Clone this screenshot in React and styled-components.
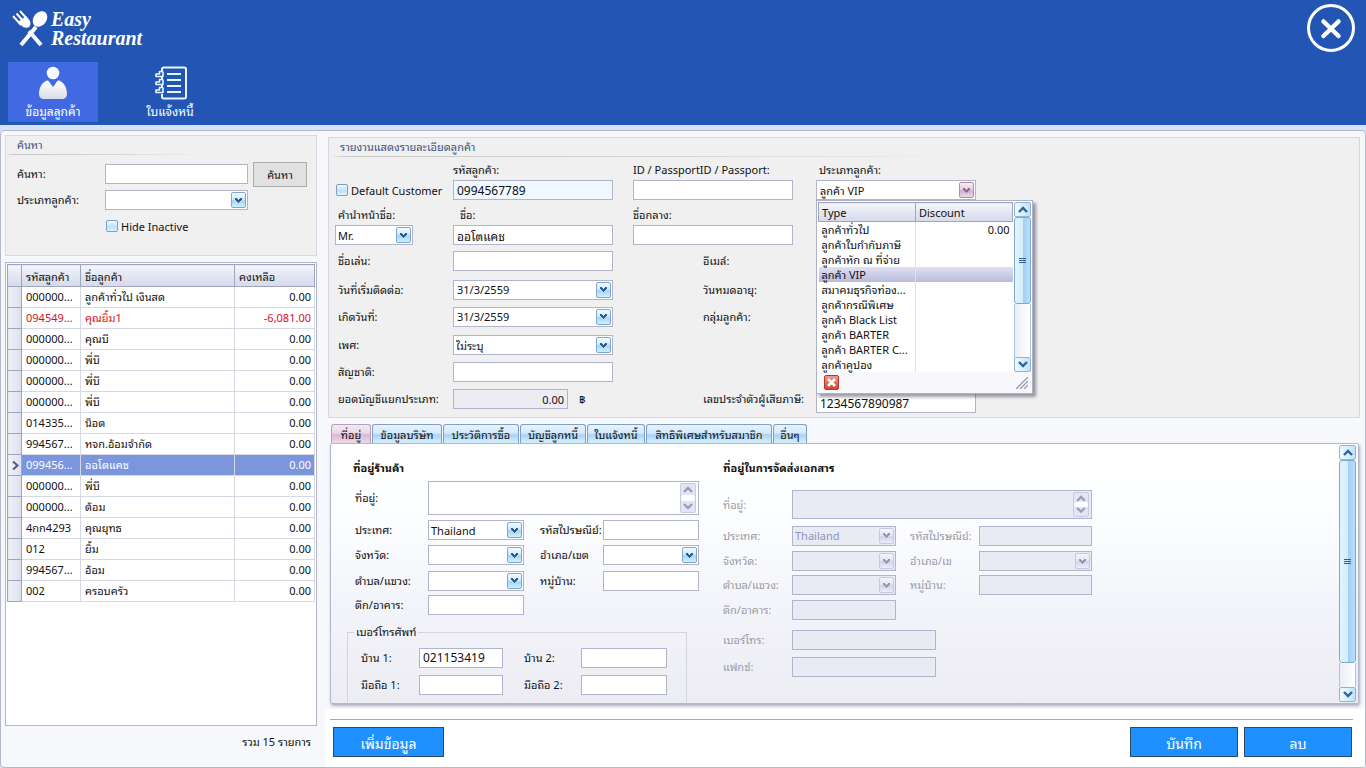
import React from 'react';
import styled, { createGlobalStyle, css } from 'styled-components';

const customers = [
    { code: '000000...', name: 'ลูกค้าทั่วไป เงินสด', balance: '0.00' },
    { code: '094549...', name: 'คุณยิ้ม1', balance: '-6,081.00', negative: true },
    { code: '000000...', name: 'คุณบี', balance: '0.00' },
    { code: '000000...', name: 'พี่บี', balance: '0.00' },
    { code: '000000...', name: 'พี่บี', balance: '0.00' },
    { code: '000000...', name: 'พี่บี', balance: '0.00' },
    { code: '014335...', name: 'น็อต', balance: '0.00' },
    { code: '994567...', name: 'หจก.อ้อมจำกัด', balance: '0.00' },
    { code: '099456...', name: 'ออโตแคช', balance: '0.00', selected: true },
    { code: '000000...', name: 'พี่บี', balance: '0.00' },
    { code: '000000...', name: 'ต้อม', balance: '0.00' },
    { code: '4กก4293', name: 'คุณยุทธ', balance: '0.00' },
    { code: '012', name: 'ยิ้ม', balance: '0.00' },
    { code: '994567...', name: 'อ้อม', balance: '0.00' },
    { code: '002', name: 'ครอบครัว', balance: '0.00' },
];

const customerTypes = [
    { type: 'ลูกค้าทั่วไป', discount: '0.00' },
    { type: 'ลูกค้าใบกำกับภาษี' },
    { type: 'ลูกค้าหัก ณ ที่จ่าย' },
    { type: 'ลูกค้า VIP', selected: true },
    { type: 'สมาคมธุรกิจท่อง...' },
    { type: 'ลูกค้ากรณีพิเศษ' },
    { type: 'ลูกค้า Black List' },
    { type: 'ลูกค้า BARTER' },
    { type: 'ลูกค้า BARTER C...' },
    { type: 'ลูกค้าคูปอง' },
];

const tabs = [
    { label: 'ที่อยู่', width: 40 },
    { label: 'ข้อมูลบริษัท', width: 70 },
    { label: 'ประวัติการซื้อ', width: 76 },
    { label: 'บัญชีลูกหนี้', width: 66 },
    { label: 'ใบแจ้งหนี้', width: 58 },
    { label: 'สิทธิพิเศษสำหรับสมาชิก', width: 126 },
    { label: 'อื่นๆ', width: 34 },
];

function Chevron({ up }) {
    return (
        <svg width="10" height="7" viewBox="0 0 10 7" fill="none" stroke="currentColor" strokeWidth="2.4">
            <path d={up ? 'M1 6 5 2l4 4' : 'M1 1l4 4 4-4'} />
        </svg>
    );
}

function Arrow() {
    return (
        <svg width="7" height="5" viewBox="0 0 7 5" fill="currentColor">
            <path d="M0 0h2v1h1v1h1V1h1V0h2v2H6v1H5v1H4v1H3V4H2V3H1V2H0z" />
        </svg>
    );
}

function Select({ id, value = '', disabled, width }) {
    return (
        <Box $width={width} $disabled={disabled}>
            <NativeSelect id={id} defaultValue={value} disabled={disabled}>
                <option>{value}</option>
            </NativeSelect>
            <Drop as="span" $disabled={disabled}><Arrow /></Drop>
        </Box>
    );
}

function DateBox({ id, value }) {
    return (
        <Box $width={160}>
            <BoxInput id={id} defaultValue={value} />
            <Drop type="button" aria-label={value}><Arrow /></Drop>
        </Box>
    );
}

function ScrollBar({ thumb, track }) {
    return (
        <Scroll>
            <ScrollEnd type="button" aria-label="up"><Chevron up /></ScrollEnd>
            <Thumb $size={thumb}><i /><i /><i /></Thumb>
            <Track $size={track} />
            <ScrollEnd type="button" aria-label="down"><Chevron /></ScrollEnd>
        </Scroll>
    );
}

function TextBox({ id, disabled }) {
    return (
        <AreaBox $disabled={disabled}>
            <textarea id={id} disabled={disabled} />
            <Spin>
                <Chevron up />
                <b />
                <Chevron />
            </Spin>
        </AreaBox>
    );
}

function Header() {
    return (
        <HeaderStyled>
            <div className="top">
                <a className="logo" href="#">
                    <svg width="38" height="38" viewBox="0 0 38 38" fill="none" stroke="#fff">
                        <path d="M17 21 29 35" strokeWidth="4" />
                        <path d="M24 17 9 35" strokeWidth="4" />
                        <path d="M1 6l8 9M4.500 3.500l8 9M8 1l8 9" strokeWidth="1.900" />
                        <path d="M6 12 14 6l4 5c1 3 0 5-1 6s-4 1-6 0z" fill="#fff" stroke="none" />
                        <ellipse cx="28" cy="9" rx="6.500" ry="8.500" transform="rotate(38 28 9)" fill="#fff" stroke="none" />
                    </svg>
                    <span>Easy<br />Restaurant</span>
                </a>
                <button className="close" aria-label="close">
                    <svg width="48" height="48" viewBox="0 0 48 48" fill="none" stroke="#fff">
                        <circle cx="24" cy="24" r="22.500" strokeWidth="3" />
                        <path d="M16.500 17.500 31.500 32M31.500 17.500 16.500 32" strokeWidth="4.500" strokeLinecap="round" />
                    </svg>
                </button>
            </div>
            <nav>
                <NavButton $active>
                    <svg width="32" height="34" viewBox="0 0 32 34">
                        <defs>
                            <linearGradient id="person" x1="0" y1="0" x2="0" y2="1">
                                <stop offset="0" stopColor="#fff" />
                                <stop offset="1" stopColor="#d9dde8" />
                            </linearGradient>
                        </defs>
                        <circle cx="16" cy="7" r="6.300" fill="#f5faff" />
                        <path d="M9 15c2-1 3 0 4 2l3 4 3-4c1-2 2-3 4-2 5 2 7 8 7 13 0 3-2 5-5 5H7c-3 0-5-2-5-5 0-5 2-11 7-13z" fill="url(#person)" />
                    </svg>
                    ข้อมูลลูกค้า
                </NavButton>
                <NavButton>
                    <svg width="34" height="34" viewBox="0 0 34 34" fill="none" stroke="#eaf6ff" strokeWidth="2">
                        <path d="M9 5V3c0-1 1-1.500 2-1.500h20c1 0 2 .5 2 1.500v28c0 1-1 1.500-2 1.500H11c-1 0-2-.5-2-1.500v-3M9 10v3M9 18v3" />
                        <path d="M14 8h14M14 14h14M14 20h14M14 26h14" />
                        <path d="M10 5.500H6.500v2.500H3v2.500h7V5.500M10 13.500H6.500V16H3v2.500h7v-5M10 21.500H6.500V24H3v2.500h7v-5" strokeWidth="1.600" strokeLinejoin="round" />
                    </svg>
                    ใบแจ้งหนี้
                </NavButton>
            </nav>
        </HeaderStyled>
    );
}

function Sidebar() {
    return (
        <SidebarStyled>
            <Group>
                <GroupTitle>ค้นหา</GroupTitle>
                <SearchForm>
                    <Label htmlFor="search">ค้นหา:</Label>
                    <Input id="search" />
                    <SearchButton type="button">ค้นหา</SearchButton>
                    <Label htmlFor="searchType">ประเภทลูกค้า:</Label>
                    <Select id="searchType" />
                    <Check className="inactive"><input type="checkbox" />Hide Inactive</Check>
                </SearchForm>
            </Group>
            <GridBox>
                <CustomerTable>
                    <colgroup>
                        <col className="mark" />
                        <col className="code" />
                        <col />
                        <col className="balance" />
                    </colgroup>
                    <thead>
                        <tr>
                            <th />
                            <th>รหัสลูกค้า</th>
                            <th>ชื่อลูกค้า</th>
                            <th>คงเหลือ</th>
                        </tr>
                    </thead>
                    <tbody>
                        {customers.map((c, i) => (
                            <CustomerRow key={i} $negative={c.negative} $selected={c.selected}>
                                <th>
                                    {c.selected && (
                                        <svg width="8" height="9" viewBox="0 0 8 9" fill="none" stroke="#4f5a8c" strokeWidth="2">
                                            <path d="M1 .5 5.500 4.500 1 8.500" />
                                        </svg>
                                    )}
                                </th>
                                <td>{c.code}</td>
                                <td>{c.name}</td>
                                <td className="number">{c.balance}</td>
                            </CustomerRow>
                        ))}
                    </tbody>
                </CustomerTable>
            </GridBox>
            <Total>รวม 15 รายการ</Total>
        </SidebarStyled>
    );
}

function TypePopup() {
    return (
        <Popup>
            <div className="list">
                <TypeTable>
                    <thead>
                        <tr><th>Type</th><th>Discount</th></tr>
                    </thead>
                    <tbody>
                        {customerTypes.map((t) => (
                            <TypeRow key={t.type} $selected={t.selected}>
                                <td>{t.type}</td>
                                <td className="number">{t.discount}</td>
                            </TypeRow>
                        ))}
                    </tbody>
                </TypeTable>
                <ScrollBar thumb={87} track={54} />
            </div>
            <div className="bottom">
                <button type="button" aria-label="clear">
                    <svg width="9" height="9" viewBox="0 0 9 9" stroke="#fff" strokeWidth="2.600">
                        <path d="M1 1l7 7M8 1 1 8" />
                    </svg>
                </button>
                <svg width="12" height="12" viewBox="0 0 12 12" stroke="#9a9db5" strokeWidth="1.400">
                    <path d="M0 12 12 0M4 12l8-8M8 12l4-4" />
                </svg>
            </div>
        </Popup>
    );
}

function Details() {
    return (
        <Group>
            <GroupTitle $wide>รายงานแสดงรายละเอียดลูกค้า</GroupTitle>
            <DetailForm>
                <Label htmlFor="code" $col={2} $row={1}>รหัสลูกค้า:</Label>
                <Label htmlFor="passport" $col="3 / 5" $row={1}>ID / PassportID / Passport:</Label>
                <Label htmlFor="type" $col={5} $row={1} $indent={3}>ประเภทลูกค้า:</Label>

                <Cell $col={1} $row={2}><Check><input type="checkbox" />Default Customer</Check></Cell>
                <Cell $col={2} $row={2}><Input id="code" defaultValue="0994567789" $width={160} $tint /></Cell>
                <Cell $col="3 / 5" $row={2}><Input id="passport" $width={160} /></Cell>
                <Cell $col={5} $row={2}>
                    <Anchor>
                        <Box $width={160}>
                            <BoxInput id="type" defaultValue="ลูกค้า VIP" />
                            <Drop type="button" aria-label="type" $open><Arrow /></Drop>
                        </Box>
                        <TypePopup />
                    </Anchor>
                </Cell>

                <Label htmlFor="title" $col={1} $row={3} $indent={3}>คำนำหน้าชื่อ:</Label>
                <Label htmlFor="name" $col={2} $row={3} $indent={7}>ชื่อ:</Label>
                <Label htmlFor="middle" $col="3 / 5" $row={3}>ชื่อกลาง:</Label>

                <Cell $col={1} $row={4}><Select id="title" value="Mr." width={78} /></Cell>
                <Cell $col={2} $row={4}><Input id="name" defaultValue="ออโตแคช" $width={160} /></Cell>
                <Cell $col="3 / 5" $row={4}><Input id="middle" $width={160} /></Cell>

                <Label htmlFor="nick" $col={1} $row={5} $indent={3}>ชื่อเล่น:</Label>
                <Cell $col={2} $row={5}><Input id="nick" $width={160} /></Cell>
                <Label as="span" $col={4} $row={5}>อีเมล์:</Label>

                <Label htmlFor="start" $col={1} $row={6} $indent={3}>วันที่เริ่มติดต่อ:</Label>
                <Cell $col={2} $row={6}><DateBox id="start" value="31/3/2559" /></Cell>
                <Label as="span" $col={4} $row={6}>วันหมดอายุ:</Label>

                <Label htmlFor="birth" $col={1} $row={7} $indent={3}>เกิดวันที่:</Label>
                <Cell $col={2} $row={7}><DateBox id="birth" value="31/3/2559" /></Cell>
                <Label as="span" $col={4} $row={7}>กลุ่มลูกค้า:</Label>

                <Label htmlFor="sex" $col={1} $row={8} $indent={3}>เพศ:</Label>
                <Cell $col={2} $row={8}><Select id="sex" value="ไม่ระบุ" width={160} /></Cell>

                <Label htmlFor="nation" $col={1} $row={9} $indent={3}>สัญชาติ:</Label>
                <Cell $col={2} $row={9}><Input id="nation" $width={160} /></Cell>

                <Label htmlFor="ledger" $col={1} $row={10} $indent={3}>ยอดบัญชีแยกประเภท:</Label>
                <Cell $col={2} $row={10}>
                    <LedgerInput id="ledger" defaultValue="0.00" readOnly $width={115} />
                    <span>฿</span>
                </Cell>
                <Label htmlFor="tax" $col={4} $row={10}>เลขประจำตัวผู้เสียภาษี:</Label>
                <TaxCell $col={5} $row={10}><Input id="tax" defaultValue="1234567890987" $width={160} /></TaxCell>
            </DetailForm>
        </Group>
    );
}

function ShopAddress() {
    return (
        <Address>
            <h3>ที่อยู่ร้านค้า</h3>
            <ShopGrid>
                <Label htmlFor="addr">ที่อยู่:</Label>
                <div className="wide"><TextBox id="addr" /></div>
                <Label htmlFor="country">ประเทศ:</Label>
                <Select id="country" value="Thailand" />
                <Label htmlFor="zip" $indent={16}>รหัสไปรษณีย์:</Label>
                <Input id="zip" />
                <Label htmlFor="province">จังหวัด:</Label>
                <Select id="province" />
                <Label htmlFor="district" $indent={16}>อำเภอ/เขต</Label>
                <Select id="district" />
                <Label htmlFor="sub">ตำบล/แขวง:</Label>
                <Select id="sub" />
                <Label htmlFor="village" $indent={16}>หมู่บ้าน:</Label>
                <Input id="village" />
                <Label htmlFor="building">ตึก/อาคาร:</Label>
                <Input id="building" />
            </ShopGrid>
            <Phones>
                <legend>เบอร์โทรศัพท์</legend>
                <Label htmlFor="home1">บ้าน 1:</Label>
                <Input id="home1" defaultValue="021153419" />
                <Label htmlFor="home2" $indent={21}>บ้าน 2:</Label>
                <Input id="home2" />
                <Label htmlFor="mobile1">มือถือ 1:</Label>
                <Input id="mobile1" />
                <Label htmlFor="mobile2" $indent={21}>มือถือ 2:</Label>
                <Input id="mobile2" />
            </Phones>
        </Address>
    );
}

function DeliveryAddress() {
    return (
        <Address>
            <h3>ที่อยู่ในการจัดส่งเอกสาร</h3>
            <DeliveryGrid>
                <Label htmlFor="dAddr">ที่อยู่:</Label>
                <div className="wide"><TextBox id="dAddr" disabled /></div>
                <Label htmlFor="dCountry">ประเทศ:</Label>
                <Select id="dCountry" value="Thailand" disabled />
                <Label htmlFor="dZip" $indent={14}>รหัสไปรษณีย์:</Label>
                <Input id="dZip" disabled />
                <Label htmlFor="dProvince">จังหวัด:</Label>
                <Select id="dProvince" disabled />
                <Label htmlFor="dDistrict" $indent={14}>อำเภอ/เข</Label>
                <Select id="dDistrict" disabled />
                <Label htmlFor="dSub">ตำบล/แขวง:</Label>
                <Select id="dSub" disabled />
                <Label htmlFor="dVillage" $indent={14}>หมู่บ้าน:</Label>
                <Input id="dVillage" disabled />
                <Label htmlFor="dBuilding">ตึก/อาคาร:</Label>
                <Input id="dBuilding" disabled />
                <Label htmlFor="dPhone" $col={1}>เบอร์โทร:</Label>
                <Input id="dPhone" disabled $width={144} />
                <Label htmlFor="dFax" $col={1}>แฟกซ์:</Label>
                <Input id="dFax" disabled $width={144} />
            </DeliveryGrid>
        </Address>
    );
}

function App() {
    return (
        <Page>
            <GlobalStyle />
            <Header />
            <Frame>
                <Sidebar />
                <Content>
                    <Upper>
                        <Details />
                        <TabList role="tablist">
                            {tabs.map((t, i) => (
                                <Tab key={t.label} role="tab" aria-selected={i === 0} $active={i === 0} $width={t.width}>
                                    {t.label}
                                </Tab>
                            ))}
                        </TabList>
                        <TabPanel>
                            <div className="body">
                                <ShopAddress />
                                <DeliveryAddress />
                            </div>
                            <ScrollBar thumb={204} track={24} />
                        </TabPanel>
                    </Upper>
                    <Actions>
                        <div className="bar">
                            <ActionButton $width={111}>เพิ่มข้อมูล</ActionButton>
                            <div className="right">
                                <ActionButton $width={108}>บันทึก</ActionButton>
                                <ActionButton $width={108}>ลบ</ActionButton>
                            </div>
                        </div>
                    </Actions>
                </Content>
            </Frame>
        </Page>
    );
}

const GlobalStyle = createGlobalStyle`
    *{
        box-sizing: border-box;
    }
    body{
        margin: 0;
        background: #fff;
    }
    body, button, input, select, textarea{
        font-family: 'Noto Sans', 'Noto Looped Thai', 'Noto Sans Thai Looped', Loma, Waree, 'Noto Sans Thai', sans-serif;
        font-size: 11px;
        color: #111;
    }
    button{
        padding: 0;
    }
`;

const Page = styled.div`
    display: flex;
    flex-direction: column;
    height: 100vh;
    background: #d5e3f9;
`;

const HeaderStyled = styled.header`
    height: 125px;
    flex: none;
    background: #2356b4;
    .top{
        display: flex;
        justify-content: space-between;
        height: 62px;
        padding: 4px 11px 0 12px;
    }
    .logo{
        display: flex;
        gap: 1px;
        padding-top: 6px;
        color: #fff;
        text-decoration: none;
        font: italic bold 20px/19px 'Liberation Serif', serif;
    }
    .close{
        width: 48px;
        height: 48px;
        border: 0;
        background: none;
    }
    nav{
        display: flex;
        gap: 27px;
        padding-left: 8px;
    }
`;

const NavButton = styled.button`
    display: flex;
    flex-direction: column;
    align-items: center;
    gap: 3px;
    width: 90px;
    height: 60px;
    padding-top: 4px;
    border: 0;
    font-size: 12px;
    line-height: 17px;
    color: #fff;
    background: ${(p) => (p.$active ? '#4169e1' : 'none')};
`;

const Frame = styled.main`
    display: flex;
    flex: 1;
    min-height: 0;
    margin-top: 5px;
    border: 1px solid #b4b8cc;
    border-radius: 4px;
    background: #f7f8fc;
    overflow: hidden;
`;

const SidebarStyled = styled.aside`
    display: flex;
    flex-direction: column;
    flex: none;
    width: 320px;
    padding: 4px 4px 0;
`;

const Group = styled.section`
    border: 1px solid #d6dae0;
    background: #f0f0f0;
`;

const GroupTitle = styled.h2`
    margin: 0;
    height: 19px;
    padding-left: 11px;
    font-size: 11px;
    font-weight: normal;
    line-height: 18px;
    color: #3b5580;
    background: linear-gradient(to right, #f0f0f0, #c8c8c8 3%, #d4d4d4 50%, #f0f0f0) left bottom / ${(p) => (p.$wide ? '62%' : '64%')} 1px no-repeat;
`;

const SearchForm = styled.form`
    display: grid;
    grid-template-columns: 83px 143px 54px;
    grid-auto-rows: 26px;
    column-gap: 5px;
    align-items: center;
    padding: 6px 0 16px 11px;
    .inactive{
        grid-column: 2;
    }
`;

const Label = styled.label`
    grid-column: ${(p) => p.$col || 'auto'};
    grid-row: ${(p) => p.$row || 'auto'};
    align-self: ${(p) => (p.$row === 3 ? 'end' : 'center')};
    padding-left: ${(p) => p.$indent || 0}px;
    line-height: 18px;
    white-space: nowrap;
`;

const Cell = styled.div`
    display: flex;
    align-items: center;
    gap: 11px;
    grid-column: ${(p) => p.$col};
    grid-row: ${(p) => p.$row};
`;

const TaxCell = styled(Cell)`
    align-items: flex-end;
    padding-bottom: 2px;
`;

const Anchor = styled.div`
    position: relative;
`;

const Input = styled.input`
    width: ${(p) => (p.$width ? p.$width + 'px' : '100%')};
    height: 20px;
    padding: 0 3px;
    border: 1px solid #b3b3cc;
    outline: 0;
    font-size: 12px;
    background: ${(p) => (p.$tint ? '#f0f8ff' : '#fff')};
    &:disabled{
        background: #e8ebf3;
        border-color: #b1b4cc;
    }
`;

const LedgerInput = styled(Input)`
    font-size: 11px;
    text-align: right;
    background: #ececf2;
`;

const Box = styled.div`
    display: grid;
    grid-template-columns: 1fr 16px;
    align-items: center;
    width: ${(p) => (p.$width ? p.$width + 'px' : '100%')};
    height: 20px;
    border: 1px solid #b3b3cc;
    background: ${(p) => (p.$disabled ? '#e8ebf3' : '#fff')};
`;

const NativeSelect = styled.select`
    grid-area: 1 / 1 / 2 / 3;
    height: 18px;
    padding: 0 18px 0 2px;
    border: 0;
    outline: 0;
    appearance: none;
    background: none;
    &:disabled{
        color: #8f93c0;
        opacity: 1;
    }
`;

const BoxInput = styled.input`
    grid-area: 1 / 1 / 2 / 2;
    min-width: 0;
    height: 18px;
    padding: 0 3px;
    border: 0;
    outline: 0;
    background: none;
`;

const Drop = styled.button`
    grid-area: 1 / 2 / 2 / 3;
    display: flex;
    align-items: center;
    justify-content: center;
    width: 15px;
    height: 16px;
    border: 1px solid #7fa9cc;
    border-radius: 2px;
    color: #2c5b8c;
    pointer-events: none;
    background: linear-gradient(#f2fbff, #cfeafb 45%, #a6d4f5 55%, #cdf0ff);
    ${(p) => p.$open && css`
        border-color: #b58bab;
        color: #8b6b8e;
        background: linear-gradient(#f7eef4, #e6cfdf 45%, #d3adc9 55%, #eed9e8);
    `}
    ${(p) => p.$disabled && css`
        border-color: #c6c9e0;
        color: #9396b8;
        background: linear-gradient(#f4f5fc, #e4e6f4 45%, #d0d3ea 55%, #eceefa);
    `}
`;

const SearchButton = styled.button`
    height: 25px;
    border: 1px solid #adadad;
    background: #e1e1e1;
`;

const Check = styled.label`
    display: flex;
    align-items: center;
    gap: 3px;
    padding-left: 1px;
    white-space: nowrap;
    input{
        appearance: none;
        width: 12px;
        height: 12px;
        margin: 0;
        border: 1px solid #7f9fbf;
        border-radius: 2px;
        background: linear-gradient(#eefaff, #b9e2f7 60%, #e0f6ff);
    }
`;

const GridBox = styled.div`
    flex: 1;
    margin-top: 6px;
    width: 312px;
    padding: 1px;
    border: 1px solid #b3b6c8;
    background: #fff;
    overflow: hidden;
`;

const CustomerTable = styled.table`
    width: 100%;
    table-layout: fixed;
    border-collapse: collapse;
    .mark{ width: 14px; }
    .code{ width: 59px; }
    .balance{ width: 80px; }
    thead th{
        height: 22px;
        padding: 0 4px;
        border: 1px solid #a0a5bf;
        font-weight: normal;
        text-align: left;
        background: linear-gradient(#f6f7fc, #e3e6f2 50%, #d6daea);
    }
`;

const CustomerRow = styled.tr`
    color: ${(p) => (p.$selected ? '#fff' : p.$negative ? '#d8101c' : '#111')};
    background: ${(p) => (p.$selected ? '#7b96dc' : '#fff')};
    th{
        height: 21px;
        padding: 0 0 0 2px;
        border: 1px solid #a0a5bf;
        line-height: 9px;
        background: linear-gradient(to right, #f0f1f8, #dcdfec);
    }
    td{
        padding: 0 4px;
        border: 1px solid #d6d8e4;
        line-height: 16px;
        white-space: nowrap;
        overflow: hidden;
    }
    .number{
        padding-right: 3px;
        text-align: right;
    }
`;

const Total = styled.p`
    margin: 0;
    height: 41px;
    padding-right: 6px;
    line-height: 31px;
    text-align: right;
`;

const Content = styled.div`
    display: flex;
    flex-direction: column;
    flex: 1;
    min-width: 0;
    padding-left: 4px;
`;

const Upper = styled.div`
    display: flex;
    flex-direction: column;
    flex: 1;
    min-height: 0;
    padding: 6px 5px 5px 3px;
`;

const DetailForm = styled.form`
    display: grid;
    grid-template-columns: 118px 180px 70px 113px 1fr;
    grid-template-rows: 18px 22px 23px 22px 30px 27px 27px 30px 23px 32px;
    padding: 4px 0 2px 6px;
`;

const Scroll = styled.div`
    display: flex;
    flex-direction: column;
    flex: none;
    width: 17px;
    background: #fff;
`;

const ScrollEnd = styled.button`
    display: flex;
    align-items: center;
    justify-content: center;
    flex: none;
    width: 100%;
    height: 15px;
    border: 1px solid #8fb4d6;
    border-radius: 2px;
    color: #2f6496;
    background: linear-gradient(to right, #f0faff, #bfe2f8);
`;

const Thumb = styled.div`
    display: flex;
    flex-direction: column;
    align-items: center;
    justify-content: center;
    gap: 1px;
    flex: ${(p) => p.$size} 1 0;
    border: 1px solid #7fa9cc;
    border-radius: 3px;
    background: linear-gradient(to right, #e2f3fd, #d4edfb 50%, #9ecff3 52%, #b7e0fa);
    i{
        width: 7px;
        height: 1px;
        background: #2f5f94;
    }
`;

const Track = styled.div`
    flex: ${(p) => p.$size} 1 0;
    border: solid #a9c6de;
    border-width: 0 1px;
    background: linear-gradient(to right, #e9eef5, #fff);
`;

const Popup = styled.div`
    position: absolute;
    top: 20px;
    left: 0;
    z-index: 2;
    width: 217px;
    border: 1px solid #aeb2c8;
    background: #f8f8fc;
    box-shadow: 3px 3px 3px rgba(60, 60, 80, .5);
    .list{
        display: flex;
        justify-content: space-between;
        padding: 1px 1px 0;
        background: #fff;
    }
    .bottom{
        display: flex;
        align-items: center;
        justify-content: space-between;
        height: 21px;
        padding: 0 4px 0 7px;
    }
    .bottom button{
        display: flex;
        align-items: center;
        justify-content: center;
        width: 15px;
        height: 15px;
        border: 1px solid #b5382c;
        border-radius: 2px;
        background: linear-gradient(#f0988a, #d8402c);
    }
`;

const TypeTable = styled.table`
    width: 195px;
    table-layout: fixed;
    border-collapse: collapse;
    th{
        height: 19px;
        padding: 0 3px;
        border: 1px solid #a0a5bf;
        font-weight: normal;
        text-align: left;
        background: linear-gradient(#f6f7fc, #e3e6f2 50%, #d6daea);
    }
`;

const TypeRow = styled.tr`
    background: ${(p) => (p.$selected ? 'linear-gradient(#e0e0f2, #b9bbdc)' : '#fff')};
    td{
        height: 15px;
        padding: 0 3px;
        line-height: 15px;
        white-space: nowrap;
    }
    td + td{
        border-left: 1px solid #dfe0e8;
    }
    .number{
        text-align: right;
    }
`;

const TabList = styled.div`
    display: flex;
    gap: 1px;
    flex: none;
    margin-top: 6px;
    padding-left: 3px;
`;

const Tab = styled.button`
    width: ${(p) => p.$width}px;
    height: 19px;
    border: 1px solid #7f9fc4;
    border-bottom: 0;
    border-radius: 3px 3px 0 0;
    white-space: nowrap;
    background: linear-gradient(#e6f3fd, #d3eafa 45%, #a9d2f2 55%, #d6f1ff);
    ${(p) => p.$active && css`
        border-color: #b79fc0;
        background: linear-gradient(#f3e9f2, #ead6e6 45%, #d9b9d4 55%, #efdcea);
    `}
`;

const TabPanel = styled.div`
    display: flex;
    flex: 1;
    min-height: 0;
    margin: 0 1px 0 2px;
    padding: 1px 2px 1px 0;
    border: 1px solid #b3b6cc;
    border-radius: 2px;
    background: linear-gradient(#fff, #fdfeff 25%, #f4f5fa 60%, #ececf3);
    box-shadow: 1px 2px 3px rgba(100, 100, 130, .5);
    .body{
        display: flex;
        align-items: flex-start;
        gap: 18px;
        flex: 1;
        min-width: 0;
        padding: 14px 0 0 16px;
        overflow: hidden;
    }
`;

const Address = styled.section`
    h3{
        margin: 0;
        padding-left: 6px;
        font-size: 11px;
        line-height: 18px;
    }
    .wide{
        grid-column: 2 / 5;
    }
`;

const ShopGrid = styled.div`
    display: grid;
    grid-template-columns: 73px 96px 79px 96px;
    grid-template-rows: 42px 22px 28px 23px 26px;
    align-items: center;
    padding-left: 8px;
`;

const DeliveryGrid = styled.div`
    display: grid;
    grid-template-columns: 69px 104px 83px 113px;
    grid-template-rows: 35px 27px 24px 24px 26px 34px 20px;
    align-items: center;
    margin-top: 10px;
    padding-left: 6px;
    color: #9a9ca6;
`;

const Phones = styled.fieldset`
    display: grid;
    grid-template-columns: 58px 84px 78px 86px;
    grid-auto-rows: 27px;
    align-items: center;
    width: 340px;
    height: 110px;
    margin: 6px 0 0;
    padding: 4px 0 0 13px;
    border: 1px solid #d3d5de;
    legend{
        margin-left: -7px;
        padding: 0 2px;
        line-height: 16px;
    }
`;

const AreaBox = styled.div`
    display: flex;
    height: ${(p) => (p.$disabled ? '29px' : '34px')};
    padding: 1px 2px;
    border: 1px solid #b3b3cc;
    background: ${(p) => (p.$disabled ? '#e8ebf3' : '#fff')};
    textarea{
        flex: 1;
        min-width: 0;
        border: 0;
        outline: 0;
        resize: none;
        background: none;
    }
`;

const Spin = styled.span`
    display: flex;
    flex-direction: column;
    align-items: center;
    justify-content: space-between;
    width: 16px;
    padding: 2px 0;
    border: 1px solid #c9cbe0;
    border-radius: 2px;
    color: #9a9cba;
    background: #e4e5f2;
    b{
        width: 14px;
        height: 6px;
        border-radius: 3px;
        background: #fff;
    }
`;

const Actions = styled.footer`
    flex: none;
    padding: 10px 12px 10px 5px;
    background: #fff;
    .bar{
        display: flex;
        justify-content: space-between;
        padding: 7px 1px 0 3px;
        border-top: 1px solid #a9a9ae;
    }
    .right{
        display: flex;
        gap: 6px;
    }
`;

const ActionButton = styled.button`
    width: ${(p) => p.$width}px;
    height: 30px;
    border: 1px solid #2a4a6c;
    font-size: 14px;
    color: #fff;
    background: #1e90ff;
`;

export default App;
